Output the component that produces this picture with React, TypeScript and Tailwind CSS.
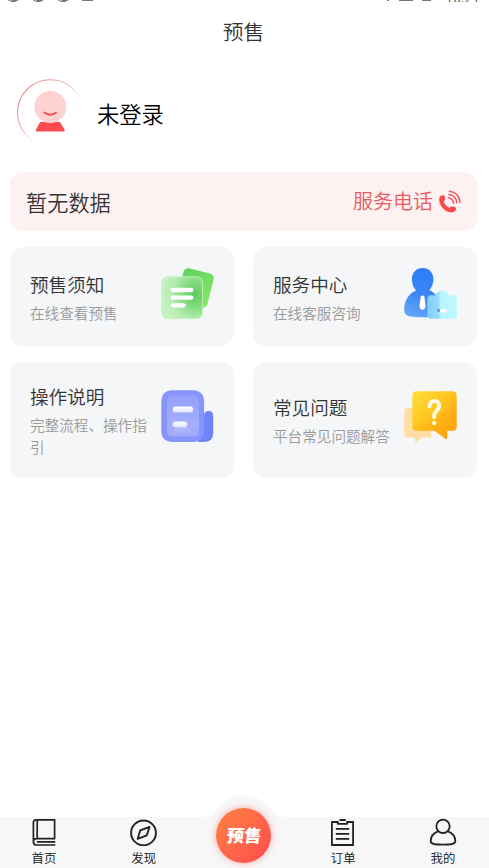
import React from "react";

const NoticeIcon = () => (
  <svg width="55" height="55" viewBox="0 0 55 55">
    <defs>
      <linearGradient id="noticeBack" x1="0" y1="0" x2="1" y2="1">
        <stop offset="0" stopColor="#5fd15c" />
        <stop offset="1" stopColor="#86ea68" />
      </linearGradient>
      <radialGradient id="noticeFront" cx="0.82" cy="0.42" r="0.8">
        <stop offset="0" stopColor="#5dcb5c" />
        <stop offset="0.35" stopColor="#7fda7b" />
        <stop offset="0.75" stopColor="#b7ecb0" />
        <stop offset="1" stopColor="#c6f1c0" />
      </radialGradient>
    </defs>
    <rect x="20" y="4.5" width="31" height="35" rx="5" transform="rotate(14 35.5 22)" fill="url(#noticeBack)" />
    <rect x="1.7" y="10.7" width="40.8" height="42" rx="5.5" fill="url(#noticeFront)" stroke="#c5f2bd" strokeWidth="0.8" />
    <path d="M12.8 24H31.2M12.8 31.7H31.2M12.8 39.3H23.6" stroke="#fff" strokeWidth="4.3" strokeLinecap="round" />
  </svg>
);

const ServiceIcon = () => (
  <svg width="55" height="55" viewBox="0 0 55 55">
    <defs>
      <linearGradient id="serviceBody" x1="0.6" y1="0" x2="0.3" y2="1">
        <stop offset="0" stopColor="#2c7bfa" />
        <stop offset="0.55" stopColor="#3c87f5" />
        <stop offset="1" stopColor="#62a6f9" />
      </linearGradient>
      <linearGradient id="serviceBag" x1="0" y1="0" x2="1" y2="0">
        <stop offset="0" stopColor="#84cdfb" />
        <stop offset="0.36" stopColor="#92dafc" />
        <stop offset="0.46" stopColor="#b9f3fe" />
        <stop offset="1" stopColor="#c0f8ff" />
      </linearGradient>
    </defs>
    <path d="M19.7 2C26 2 30.4 6.8 30.4 13C30.4 18 28.8 21.5 26.3 24.3C32.5 26.7 38 34 38 41.5V50C35 51 29 51.2 19.7 51.2C9 51.2 1.2 51.2 1.2 44C1.2 35.5 5.5 26.8 13.2 24.4C10.4 21.6 8.9 18 8.9 13C8.9 6.8 13.2 2 19.7 2Z" fill="url(#serviceBody)" />
    <path d="M17.8 30.2Q19.6 29 21.4 30.2L22.6 40.5Q21.8 43.6 19.5 44Q17.2 43.6 16.3 40.5Z" fill="#fff" />
    <path d="M28 29.3H33.3Q34.3 25.6 37 25.6Q39.4 23.4 42 25.6Q44.6 25.6 45.4 29.3H50.5Q54 29.3 54 33V49Q54 52.8 50.5 52.8H28Q24.3 52.8 24.3 49V33Q24.3 29.3 28 29.3Z" fill="url(#serviceBag)" />
    <circle cx="35.5" cy="44.5" r="1.4" fill="#4095ef" />
    <path d="M38.5 44.7H42.3" stroke="#fff" strokeWidth="3.4" strokeLinecap="round" />
  </svg>
);

const GuideIcon = () => (
  <svg width="55" height="55" viewBox="0 0 55 55">
    <defs>
      <linearGradient id="guideOuter" x1="0" y1="0" x2="0.8" y2="1">
        <stop offset="0" stopColor="#8795fb" />
        <stop offset="1" stopColor="#8794fb" />
      </linearGradient>
      <linearGradient id="guideInner" x1="0" y1="0" x2="0" y2="1">
        <stop offset="0" stopColor="#949ffb" />
        <stop offset="0.7" stopColor="#a2b0fc" />
        <stop offset="1" stopColor="#98a2fb" />
      </linearGradient>
      <linearGradient id="guideFlap" x1="0" y1="0" x2="0" y2="1">
        <stop offset="0" stopColor="#bac3fd" />
        <stop offset="1" stopColor="#9aa5fb" />
      </linearGradient>
      <linearGradient id="guideLine" x1="0" y1="0" x2="0" y2="1">
        <stop offset="0" stopColor="#fff" />
        <stop offset="1" stopColor="#dfe4ff" />
      </linearGradient>
    </defs>
    <path d="M44 27Q44.7 23 48.8 23Q53.2 23 53.2 28V45Q53.2 54 43.5 54H38Z" fill="#7183fb" />
    <rect x="1.3" y="2.2" width="42.8" height="51.8" rx="10" fill="url(#guideOuter)" />
    <rect x="7" y="7.6" width="32" height="41" rx="5" fill="url(#guideInner)" />
    <path d="M7.5 46L22.5 36L38.5 46Q37 48.6 34 48.6H12Q9 48.6 7.5 46Z" fill="url(#guideFlap)" />
    <rect x="12.6" y="18.6" width="20.6" height="5.8" rx="2.9" fill="url(#guideLine)" />
    <rect x="12.6" y="33.4" width="14.8" height="5.8" rx="2.9" fill="url(#guideLine)" />
  </svg>
);

const QuestionIcon = () => (
  <svg width="55" height="55" viewBox="0 0 55 55">
    <defs>
      <linearGradient id="questionFront" x1="0" y1="0" x2="1" y2="1">
        <stop offset="0" stopColor="#ffdf3f" />
        <stop offset="0.45" stopColor="#ffc51e" />
        <stop offset="1" stopColor="#ff9714" />
      </linearGradient>
    </defs>
    <path d="M5 20H28V49.5H18.5L13.5 54Q12 54.8 12 52.5V49.5H5Q1.2 49.5 1.2 45.5V24Q1.2 20 5 20Z" fill="#ffdda5" />
    <path d="M13.5 3.2H49.5Q53.7 3.2 53.7 7.5V38.5Q53.7 42.7 49.5 42.7H44.3V49.8Q44 51.8 42.3 50.8L31 42.7H13.5Q9.3 42.7 9.3 38.5V7.5Q9.3 3.2 13.5 3.2Z" fill="url(#questionFront)" />
    <path d="M9.3 38Q32 36 53.7 15V38.5Q53.7 42.7 49.5 42.7H13.5Q9.3 42.7 9.3 38.5Z" fill="#ffa400" fillOpacity="0.22" />
    <path d="M26.5 18.5C26.5 11 36.3 11.3 36.3 18C36.3 22.5 31.2 22 31.2 28V29.2" fill="none" stroke="#fffbe0" strokeWidth="4" strokeLinecap="round" />
    <circle cx="31.2" cy="34.9" r="2.2" fill="#fffbe0" />
  </svg>
);

const PhoneIcon = () => (
  <svg width="23" height="24" viewBox="0 0 23 24" fill="none">
    <path d="M1.2 8.7C1.5 6.4 3 5.4 4.5 5.2C6.2 5 6.9 6 7.1 7.6C7.3 9.5 6.9 10.4 5.8 11.3C6.5 14.3 8.7 17 11.6 17.7C12.7 16.6 13.8 16.2 15.4 16.6C17.3 17 18.4 17.9 18.1 19.3C17.6 21.4 15.9 22.4 13.5 22.4C6.5 22.2 .8 15.5 1.2 8.7Z" fill="#f94a4f" />
    <path d="M10.3 7.7Q14.9 8.3 15.7 13.1M10.8 4.4Q18 5.3 18.9 12.8M11.4 1.3Q21 2.5 22 12.3" stroke="#f2595d" strokeWidth="1.5" strokeLinecap="round" />
  </svg>
);

const Avatar = () => (
  <svg width="68" height="68" viewBox="0 0 68 68" fill="none">
    <defs>
      <linearGradient id="ring" x1="0.1" y1="0.15" x2="0.72" y2="0.8">
        <stop offset="0" stopColor="#e98383" />
        <stop offset="0.45" stopColor="#f4b0b0" />
        <stop offset="0.9" stopColor="#fff" stopOpacity="0" />
      </linearGradient>
    </defs>
    <circle cx="34.3" cy="34.5" r="32.8" stroke="url(#ring)" strokeWidth="1.1" />
    <path d="M24 44H44L48.6 51.8Q49.2 53.5 47.5 53.5H21Q19.2 53.5 20 51.8Z" fill="#fc4b50" />
    <circle cx="34.3" cy="28.9" r="16" fill="#ffd2d2" />
    <path d="M28.5 34.5Q34.4 39 40.2 34.5" stroke="#f24d52" strokeWidth="1.9" strokeLinecap="round" />
  </svg>
);

const HomeIcon = () => (
  <svg width="28" height="28" viewBox="0 0 28 28" fill="none" stroke="#222" strokeWidth="1.7">
    <path d="M24.6 20.3V1.9H6Q3.4 1.9 3.4 4.6V23.4Q3.4 27 6.5 27H25.3M25.3 20.6H6.5Q3.4 20.6 3.4 23.4M7.2 1.9V20.6M25.3 23.8H6.8" />
  </svg>
);

const DiscoverIcon = () => (
  <svg width="28" height="28" viewBox="0 0 28 28" fill="none" stroke="#222" strokeWidth="1.9" strokeLinejoin="round">
    <circle cx="13.5" cy="14.9" r="12.4" />
    <path d="M19.5 9L16.8 17.3L7.7 20.8L10.2 12.4Z" />
  </svg>
);

const OrderIcon = () => (
  <svg width="28" height="28" viewBox="0 0 28 28" fill="none" stroke="#222" strokeWidth="1.8" strokeLinejoin="round">
    <path d="M8.8 4H2.9V27H24.1V4H18.2M8.8 3V5.8H18.2V3M10.5 2H16.8M6.8 10.8H20.2M6.8 15.8H20.2M6.8 20.8H20.2" />
  </svg>
);

const MineIcon = () => (
  <svg width="28" height="28" viewBox="0 0 28 28" fill="none" stroke="#222" strokeWidth="1.8">
    <circle cx="14" cy="8.3" r="6.7" />
    <path d="M9 13.4C4 15.3 1.7 19.3 1.7 23.3C1.7 26.2 6 26.7 14 26.7S26.3 26.2 26.3 23.3C26.3 19.3 24 15.3 19 13.4" />
  </svg>
);

interface MenuCardProps {
  title: string;
  desc: string;
  icon: React.ReactNode;
}

const MenuCard: React.FC<MenuCardProps> = ({ title, desc, icon }) => (
  <div className="flex justify-between rounded-[13px] bg-[#f4f6f8] pl-5 pr-[19px]">
    <div className="w-[120px] self-center">
      <h3 className="text-[18.6px] leading-[26px] text-[#333]">{title}</h3>
      <p className="mt-[5px] -mb-px w-[122px] text-[14.6px] leading-[22px] text-[#999]">{desc}</p>
    </div>
    <div className="shrink-0 pt-[19px]">{icon}</div>
  </div>
);

const TabItem: React.FC<{ label: string; icon: React.ReactNode }> = ({ label, icon }) => (
  <div className="flex w-[60px] flex-col items-center pt-[1px]">
    {icon}
    <span className="mt-[3px] text-[12.4px] leading-[18px] text-[#111]">{label}</span>
  </div>
);

const App: React.FC = () => {
  return (
    <div className="flex h-[868px] w-[489px] flex-col overflow-hidden bg-white font-['Noto_Sans_CJK_SC',sans-serif] font-[350]">
      <div className="flex h-[2px] items-end justify-between overflow-hidden pl-2 pr-[9px]">
        <svg width="90" height="2" viewBox="0 0 90 2" fill="#777">
          <path d="M0 0H3L2 1H1ZM4 0H11L7 1.9H2ZM25 0H28L27 1H26ZM29 0H36L32 1.9H27ZM50 0H53L52 1H51ZM54 0H61L57 1.9H52ZM74 0H85V1H74Z" />
        </svg>
        <div className="flex items-end gap-[5px]">
          <svg width="57" height="2" viewBox="0 0 57 2" fill="#777">
            <path d="M4 0H6V1H4ZM16 0H30V1H16ZM39 0H48V1H39Z" />
          </svg>
          <span className="-mb-[3px] text-[14px] leading-[16px] text-[#555]">10:21</span>
        </div>
      </div>

      <h1 className="h-[60px] pr-[2px] text-center text-[20.8px] leading-[59px] text-[#333]">预售</h1>

      {/* User */}
      <div className="mt-4 flex h-[68px] items-center pl-4">
        <Avatar />
        <span className="ml-[13px] pt-[3px] text-[22.3px] text-black">未登录</span>
      </div>

      {/* Service phone */}
      <div className="ml-[10px] mr-3 mt-[26px] flex h-[59px] items-center justify-between rounded-[13px] bg-[#fef1f1] pl-4 pr-4">
        <span className="text-[21.2px] text-[#333]">暂无数据</span>
        <div className="flex items-center gap-[5px]">
          <span className="-mt-[2px] text-[20px] text-[#e95b5e]">服务电话</span>
          <PhoneIcon />
        </div>
      </div>

      <div className="ml-[10px] mr-3 mt-4 grid grid-cols-2 grid-rows-[99px_116px] gap-x-[19px] gap-y-4">
        <MenuCard title="预售须知" desc="在线查看预售" icon={<NoticeIcon />} />
        <MenuCard title="服务中心" desc="在线客服咨询" icon={<ServiceIcon />} />
        <MenuCard
          title="操作说明"
          desc="完整流程、操作指引"
          icon={
            <div className="pt-[7px]">
              <GuideIcon />
            </div>
          }
        />
        <MenuCard
          title="常见问题"
          desc="平台常见问题解答"
          icon={
            <div className="pt-[7px]">
              <QuestionIcon />
            </div>
          }
        />
      </div>

      {/* Tab bar */}
      <div className="relative mt-auto flex h-[51px] justify-between bg-[#f7f7f7] pl-[14px] pr-[16px]">
        <TabItem label="首页" icon={<HomeIcon />} />
        <TabItem label="发现" icon={<DiscoverIcon />} />
        <div className="w-[60px]" />
        <TabItem label="订单" icon={<OrderIcon />} />
        <TabItem label="我的" icon={<MineIcon />} />
        <svg className="absolute -top-[22px] left-[203px]" width="82" height="23" viewBox="0 0 82 23">
          <path d="M0 23V22Q7 22 13 15Q24 .5 40.5 .5T69 15Q75 22 82 22V23Z" fill="#f7f7f7" />
        </svg>
        <div className="absolute -top-[9px] left-[216px] flex h-[55px] w-[55px] items-center justify-center rounded-full bg-linear-to-br from-[#ff823f] to-[#ff4850] shadow-[0_0_7px_rgba(255,80,80,0.45)]">
          <span className="-skew-x-6 pb-[2px] pl-[2px] text-[17.2px] font-black text-white">预售</span>
        </div>
      </div>
    </div>
  );
};

export default App;
